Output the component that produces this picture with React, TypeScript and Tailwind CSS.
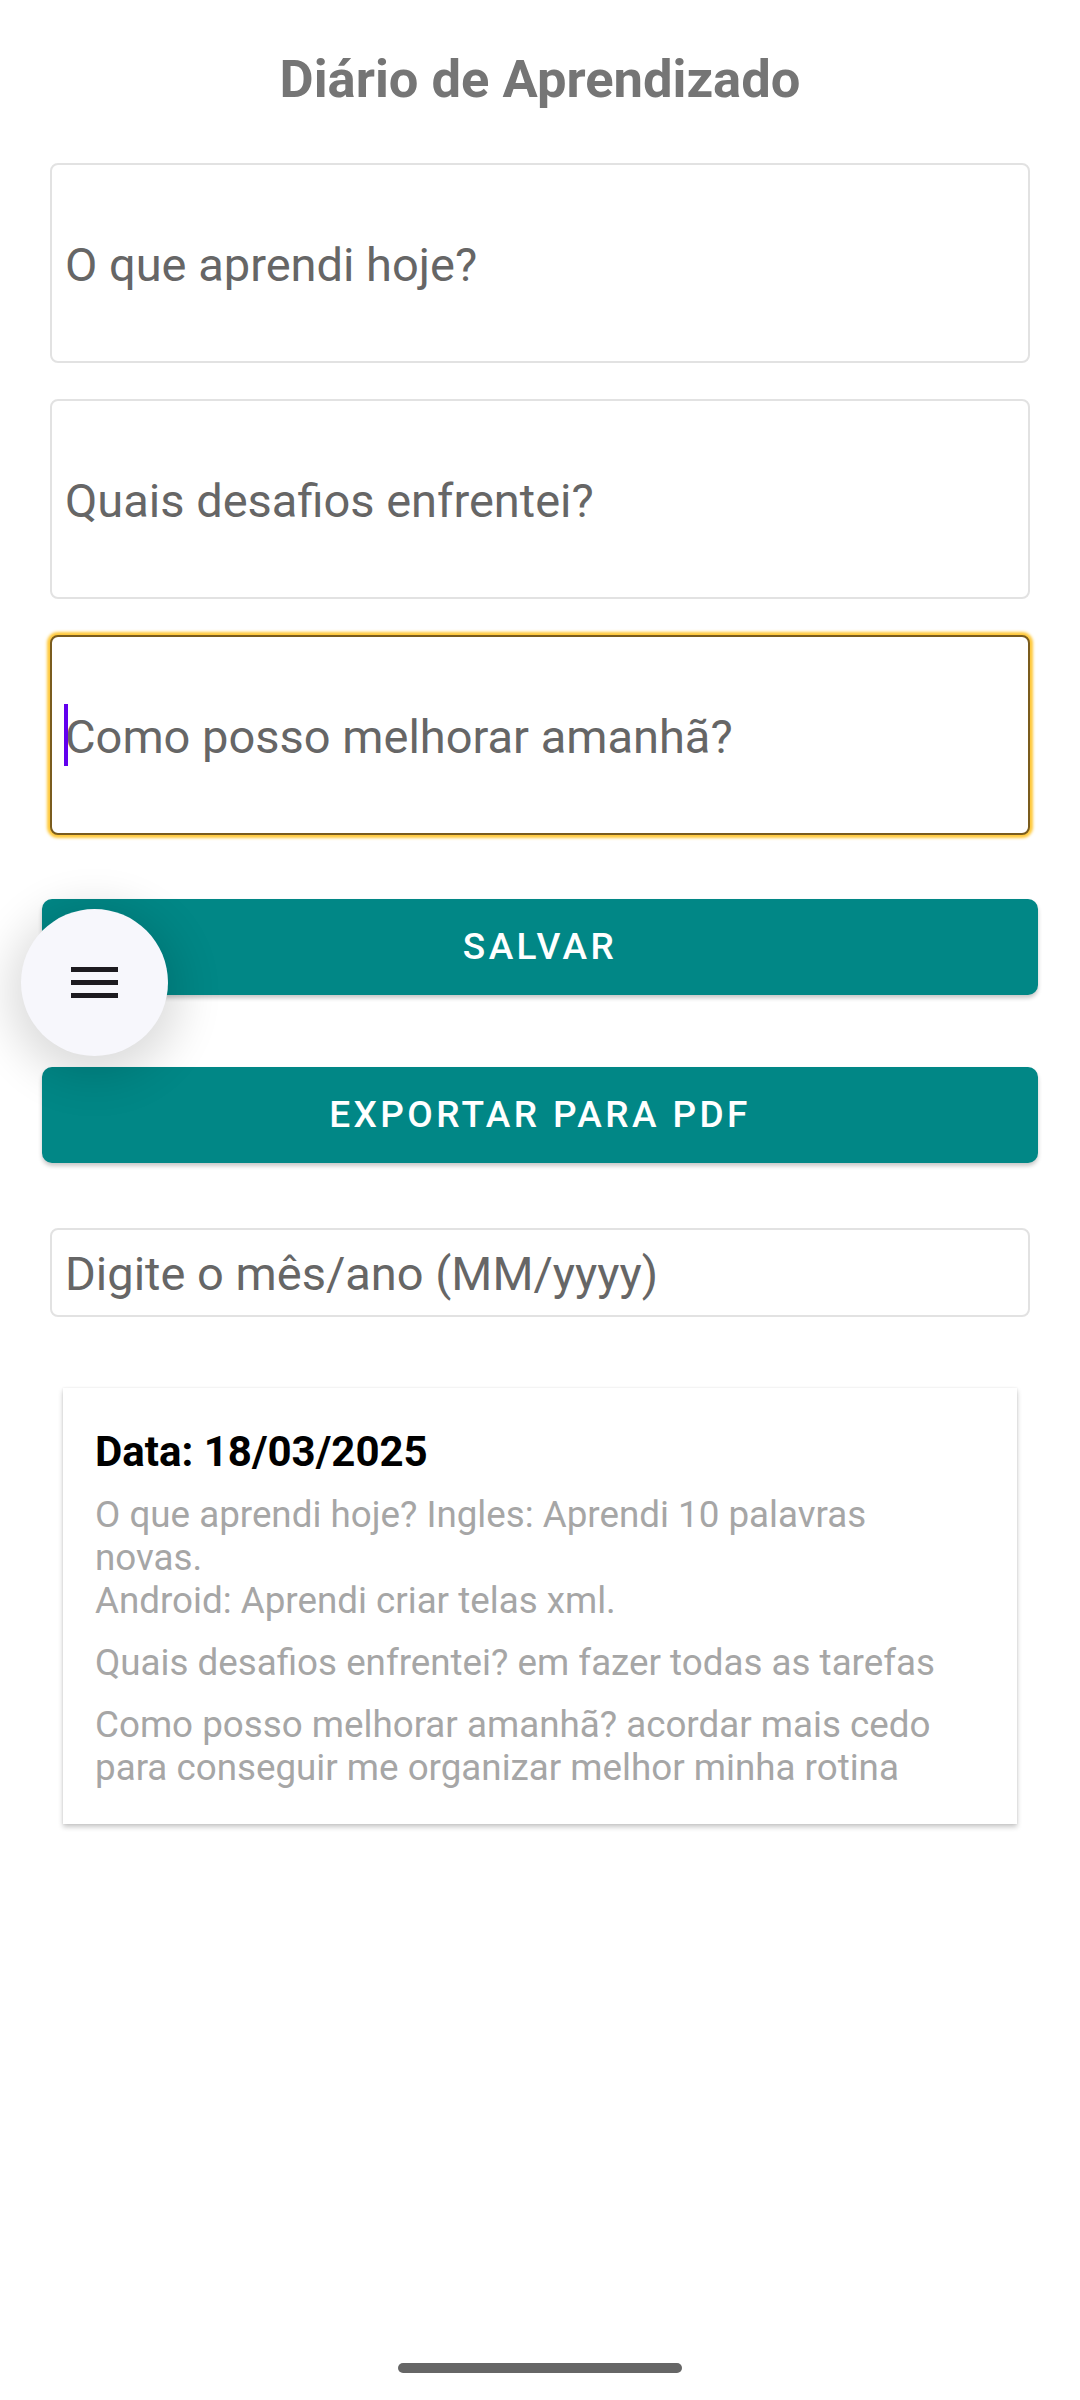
const Field = ({ label, tall = true, focused = false }: { label: string; tall?: boolean; focused?: boolean }) => {
  return (
    <div
      className={`relative flex items-center pl-[13px] pt-[2px] rounded-[8px] border-2 bg-white ${tall ? "h-[200px]" : "h-[89px]"} ${
        focused ? "border-[#7a5c1e] shadow-[0_0_3px_3px_#ffc93a]" : "border-[#e2e2e2]"
      }`}
    >
      {focused && <span className="absolute left-[12px] top-[67px] w-[4px] h-[62px] bg-[#6200ee]"></span>}
      <span className="text-[47px] leading-[55px] text-[#666666]">{label}</span>
    </div>
  )
}

const Button = ({ label }: { label: string }) => {
  return (
    <div className="mx-[42px] h-[96px] rounded-[10px] bg-[#018786] shadow-[0_3px_4px_rgba(0,0,0,0.22)] flex items-center justify-center">
      <span className="text-white text-[37px] font-medium tracking-[3.4px]">{label}</span>
    </div>
  )
}

export default function App() {
  return (
    <div className="relative w-[1080px] h-[2400px] bg-white overflow-hidden font-['Roboto',sans-serif]">
      <h1 className="pt-[49px] text-center text-[52.5px] leading-[61px] font-bold text-[#757575]">Diário de Aprendizado</h1>

      <div className="mx-[50px] mt-[53px] flex flex-col gap-[36px]">
        <Field label="O que aprendi hoje?" />
        <Field label="Quais desafios enfrentei?" />
        <Field label="Como posso melhorar amanhã?" focused />
      </div>

      <div className="mt-[64px]">
        <Button label="SALVAR" />
      </div>
      <div className="mt-[72px]">
        <Button label="EXPORTAR PARA PDF" />
      </div>

      <div className="mx-[50px] mt-[65px]">
        <Field label="Digite o mês/ano (MM/yyyy)" tall={false} />
      </div>

      <div className="mx-[63px] mt-[71px] bg-white shadow-[0_3px_5px_rgba(0,0,0,0.22),0_0_2px_rgba(0,0,0,0.08)] pl-[32px] pr-[30px] pt-[39px] pb-[35px]">
        <div className="text-[42px] leading-[49px] font-bold text-black">Data: 18/03/2025</div>
        <div className="mt-[17px] text-[36.75px] leading-[43px] text-[#a6a6a6]">
          <p>
            O que aprendi hoje? Ingles: Aprendi 10 palavras
            <br />
            novas.
            <br />
            Android: Aprendi criar telas xml.
          </p>
          <p className="mt-[19px]">Quais desafios enfrentei? em fazer todas as tarefas</p>
          <p className="mt-[19px]">
            Como posso melhorar amanhã? acordar mais cedo
            <br />
            para conseguir me organizar melhor minha rotina
          </p>
        </div>
      </div>

      {/* floating menu button */}
      <div className="absolute left-[21px] top-[909px] w-[147px] h-[147px] rounded-full bg-[#f7f7fc] shadow-[0_10px_45px_12px_rgba(0,0,0,0.14)] flex flex-col items-center justify-center gap-[8px]">
        <span className="block w-[47px] h-[5px] bg-[#1d1b20]"></span>
        <span className="block w-[47px] h-[5px] bg-[#1d1b20]"></span>
        <span className="block w-[47px] h-[5px] bg-[#1d1b20]"></span>
      </div>

      {/* gesture bar */}
      <div className="absolute left-[398px] top-[2363px] w-[284px] h-[10px] rounded-full bg-[#666666]"></div>
    </div>
  )
}
